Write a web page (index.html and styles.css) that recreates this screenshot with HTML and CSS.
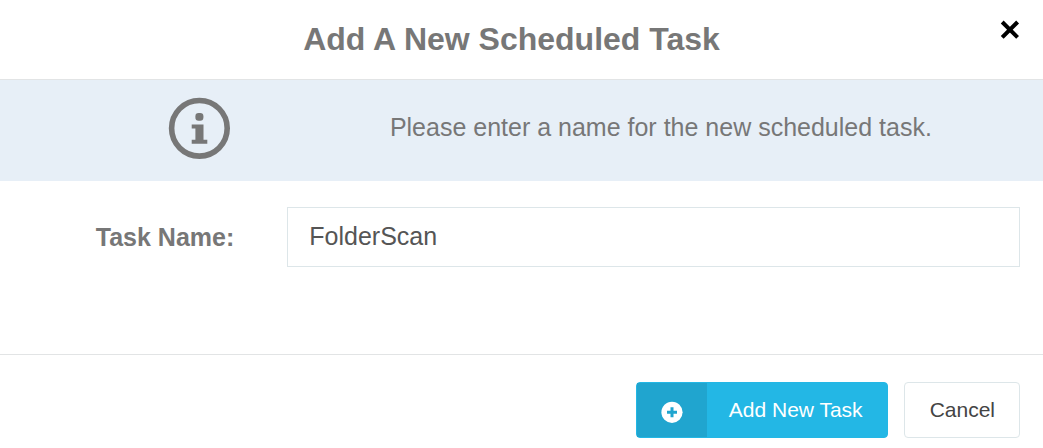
FILE: index.html
```html
<!DOCTYPE html>
<html lang="en">
    <head>
        <meta charset="UTF-8">
        <title>Add A New Scheduled Task</title>
        <link rel="stylesheet" href="styles.css">
    </head>
    <body>
        <form class="modal">
            <div class="modal-header">
                <h1 class="modal-title">Add A New Scheduled Task</h1>
                <button class="close" type="button" aria-label="Close">
                    <svg viewBox="0 0 20 20" width="20" height="20">
                        <path d="M2.2 2 L17.6 17.4 M17.6 2 L2.2 17.4"/>
                    </svg>
                </button>
            </div>

            <div class="info">
                <div class="info-icon">
                    <svg viewBox="0 0 62 62" width="62" height="62">
                        <circle class="ring" cx="31.4" cy="31.3" r="27.8"/>
                        <rect x="27.4" y="16" width="8" height="7.8" rx="3.2"/>
                        <path d="M23.7 27.6 H35.5 V42.8 H39.3 V46.8 H23.7 V42.8 H27.4 V31.5 H23.7 Z"/>
                    </svg>
                </div>
                <p class="info-text">Please enter a name for the new scheduled task.</p>
            </div>

            <div class="modal-body">
                <label class="field-label" for="taskName">Task Name:</label>
                <input class="field-input" id="taskName" type="text" name="taskName" value="FolderScan">
            </div>

            <div class="modal-footer">
                <button class="btn btn-add" type="button">
                    <span class="btn-icon">
                        <svg viewBox="0 0 22 22" width="22" height="22">
                            <circle cx="11" cy="11.3" r="10.6"/>
                            <path d="M11 6.3 V16.3 M6 11.3 H16"/>
                        </svg>
                    </span>
                    <span class="btn-text">Add New Task</span>
                </button>
                <button class="btn btn-cancel" type="button">Cancel</button>
            </div>
        </form>
    </body>
</html>
```
FILE: styles.css
```css
* {
    box-sizing: border-box;
}
body {
    margin: 0;
    background-color: #fff;
    color: #777;
    font-family: "Liberation Sans", Arial, sans-serif;
    font-size: 25px;
}
.modal-header {
    display: flex;
    align-items: flex-start;
    padding: 20px 23px;
    border-bottom: 1px solid #e2e4e5;
}
.modal-title {
    flex: 1;
    margin: 0;
    font-size: 32px;
    line-height: 39px;
    text-align: center;
}
.close {
    display: flex;
    padding: 0;
    border: none;
    background: none;
    cursor: pointer;
}
.close path {
    fill: none;
    stroke: #000;
    stroke-width: 4;
}
.info {
    display: grid;
    grid-template-columns: 6fr 11fr;
    padding: 17px 23px 22px;
    background-color: #e7eff7;
}
.info-icon {
    display: flex;
    justify-content: center;
}
.info-icon svg {
    fill: #777;
}
.info-icon .ring {
    fill: none;
    stroke: #777;
    stroke-width: 5.6;
}
.info-text {
    margin: 0;
    padding: 0 15px;
    line-height: 60px;
}
.modal-body {
    display: grid;
    grid-template-columns: 23% 1fr;
    align-items: center;
    gap: 35px;
    padding: 26px 23px 87px;
}
.field-label {
    padding-right: 18px;
    font-weight: bold;
    text-align: right;
}
.field-input {
    width: 100%;
    height: 60px;
    padding: 0 21px 2px;
    border: 1px solid #dde6e9;
    background-color: #fff;
    color: #555;
    font-family: inherit;
    font-size: 25px;
}
.modal-footer {
    display: flex;
    justify-content: flex-end;
    gap: 16px;
    padding: 27px 23px 10px;
    border-top: 1px solid #e2e4e5;
}
.btn {
    height: 56px;
    border: 1px solid;
    border-radius: 4px;
    font-family: inherit;
    font-size: 21px;
    cursor: pointer;
}
.btn-add {
    display: flex;
    align-items: stretch;
    padding: 0;
    border-color: #23b7e5;
    background-color: #23b7e5;
    color: #fff;
}
.btn-icon {
    display: flex;
    align-items: center;
    padding: 4px 24px 0;
    background-color: #20a5cf;
}
.btn-icon circle {
    fill: #fff;
}
.btn-icon path {
    stroke: #20a5cf;
    stroke-width: 3;
}
.btn-text {
    padding: 0 24px 0 22px;
    line-height: 54px;
}
.btn-cancel {
    padding: 0 24px 0 25px;
    border-color: #dde6e9;
    background-color: #fff;
    color: #444;
}
```
